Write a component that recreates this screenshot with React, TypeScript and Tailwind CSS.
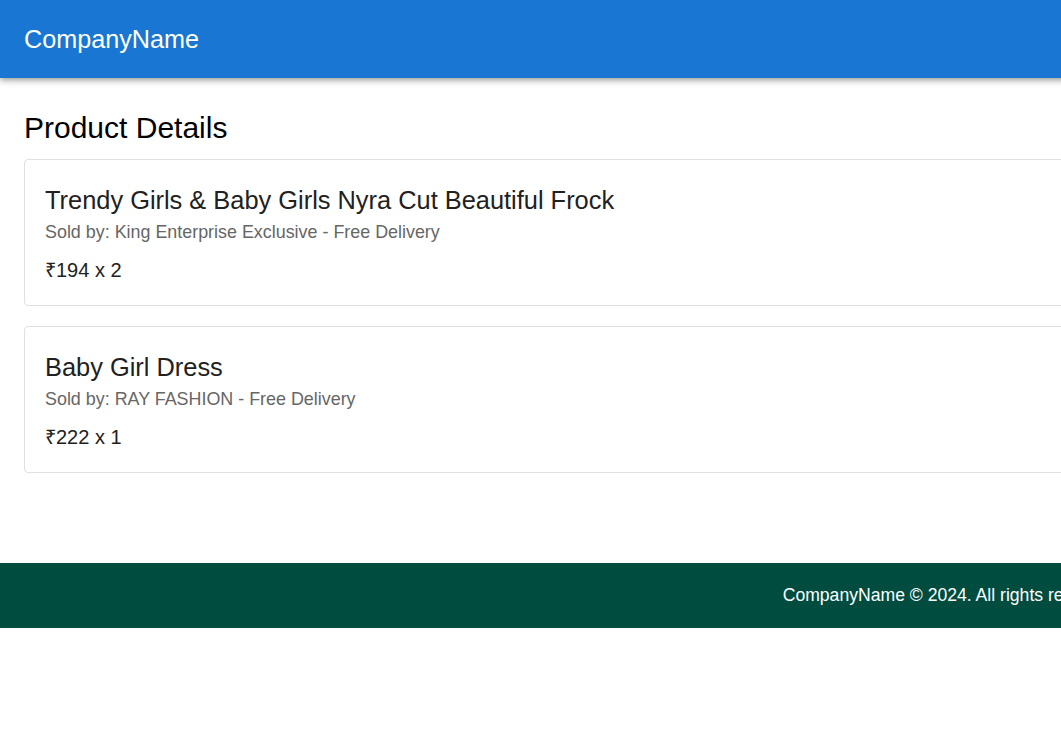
import React from "react";

const products = [
  {
    title: "Trendy Girls & Baby Girls Nyra Cut Beautiful Frock",
    seller: "King Enterprise Exclusive",
    price: 194,
    qty: 2,
  },
  {
    title: "Baby Girl Dress",
    seller: "RAY FASHION",
    price: 222,
    qty: 1,
  },
];

export default function App() {
  return (
    <div className="w-screen overflow-hidden bg-white font-['Liberation_Sans',Arial,sans-serif]">
      <div className="w-[1904px]">
        <header className="relative z-10 flex h-[78px] items-center bg-[#1976d2] px-6 pt-[2px] shadow-[0_2px_4px_-1px_rgba(0,0,0,0.2),0_4px_5px_0_rgba(0,0,0,0.14),0_1px_10px_0_rgba(0,0,0,0.12)]">
          <span className="text-[25.2px] text-white">CompanyName</span>
        </header>
        <main className="px-6 pt-8 pb-[90px]">
          <h1 className="mb-[13px] text-[30px] leading-[36px] text-black">Product Details</h1>
          <div className="flex flex-col gap-5">
            {products.map((p) => (
              <div key={p.title} className="rounded border border-[#e0e0e0] bg-white p-5">
                <div className="text-[25.4px] leading-[40px] text-[#212121]">{p.title}</div>
                <div className="text-[17.9px] leading-[25px] text-[#666666]">
                  Sold by: {p.seller} - Free Delivery
                </div>
                <div className="mt-[10px] text-[20px] leading-[30px] text-[#212121]">
                  ₹{p.price} x {p.qty}
                </div>
              </div>
            ))}
          </div>
        </main>
        <footer className="flex h-[65px] items-center justify-center bg-[#004d40]">
          <span className="text-[17.6px] text-white">CompanyName © 2024. All rights reserved.</span>
        </footer>
      </div>
    </div>
  );
}
